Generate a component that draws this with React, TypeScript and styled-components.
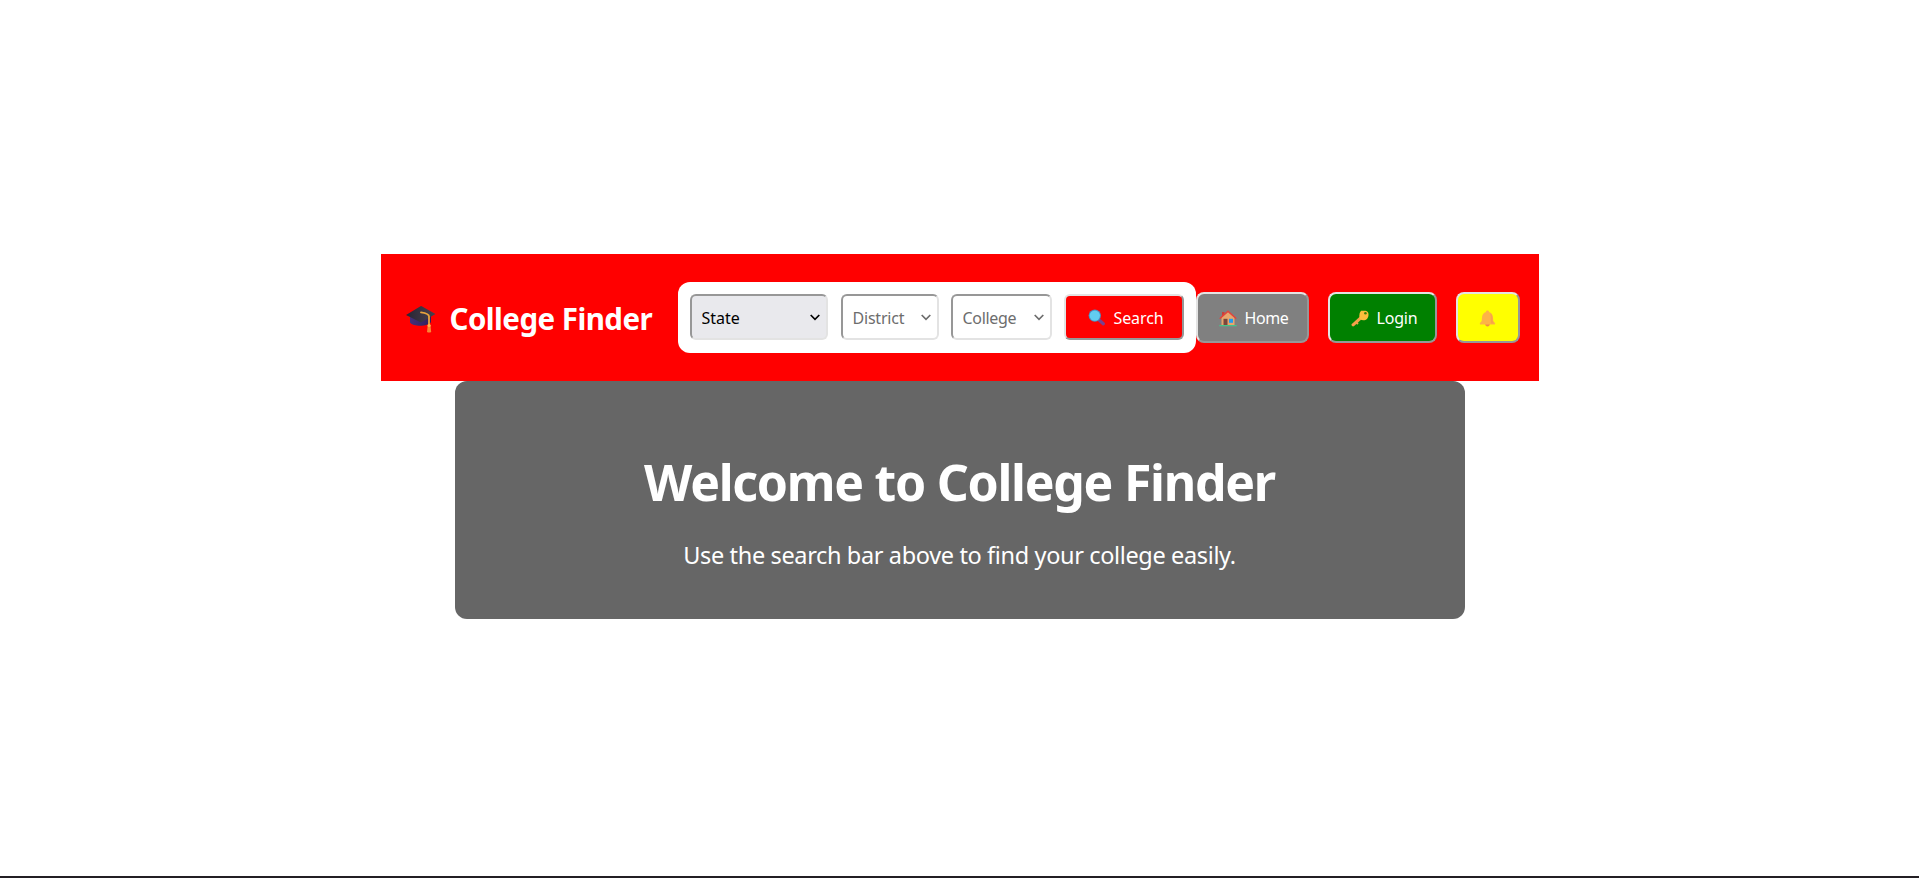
import React from "react";
import styled, { createGlobalStyle } from "styled-components";

const GlobalStyle = createGlobalStyle`
  *, *::before, *::after { box-sizing: border-box; }
  body {
    margin: 0;
    background: #fff;
    font-family: "Noto Sans", "Open Sans", sans-serif;
  }
`;

const Page = styled.div`
  display: flex;
  flex-direction: column;
  align-items: center;
  height: 878px;
  padding-top: 254px;
  border-bottom: 2px solid #231f24;
  overflow: hidden;
`;

const Header = styled.header`
  display: flex;
  align-items: center;
  width: 1158px;
  height: 127px;
  padding-left: 24px;
  background: #ff0000;
`;

const Brand = styled.div`
  display: flex;
  align-items: center;
  flex: none;
  gap: 13px;
  width: 273px;
  padding-top: 2px;
  color: #fff;
  font-size: 29.5px;
  font-weight: 700;
  letter-spacing: -0.53px;
  white-space: nowrap;
`;

const SearchBar = styled.div`
  display: flex;
  align-items: center;
  flex: none;
  width: 518px;
  height: 71px;
  padding: 0 0 1px 12px;
  background: #fff;
  border-radius: 12px;
`;

const SelectBox = styled.div<{ $width: number; $gap: number }>`
  position: relative;
  flex: none;
  width: ${(p) => p.$width}px;
  height: 46px;
  margin-right: ${(p) => p.$gap}px;
`;

const Select = styled.select<{ $tracking: number }>`
  appearance: none;
  display: block;
  width: 100%;
  height: 100%;
  padding: 2px 0 0 10px;
  border: 2px solid;
  border-color: #979797 #e3e3e3 #e3e3e3 #979797;
  border-radius: 6px;
  background: #e9e9ed;
  color: #000;
  font: 16px "Noto Sans", "Open Sans", sans-serif;
  letter-spacing: ${(p) => p.$tracking}px;
  opacity: 1;

  &:disabled {
    background: #fff;
    color: #6d6d6d;
    opacity: 1;
  }
`;

const Chevron = styled.svg<{ $muted?: boolean }>`
  position: absolute;
  top: 20px;
  right: 8px;
  width: 10px;
  height: 7px;
  fill: none;
  stroke: ${(p) => (p.$muted ? "#6d6d6d" : "#000")};
  stroke-width: 1.7;
  pointer-events: none;
`;

const Button = styled.button<{ $bg: string; $width: number; $short?: boolean }>`
  display: flex;
  align-items: center;
  flex: none;
  gap: ${(p) => (p.$short ? 9 : 8)}px;
  width: ${(p) => p.$width}px;
  height: ${(p) => (p.$short ? 46 : 51)}px;
  padding: 1px 0 0 ${(p) => (p.$short ? 22 : 21)}px;
  border: 2px solid;
  border-color: #e3e3e3 #979797 #979797 #e3e3e3;
  border-radius: ${(p) => (p.$short ? 6 : 8)}px;
  background: ${(p) => p.$bg};
  color: #fff;
  font: 16px "Noto Sans", "Open Sans", sans-serif;
  white-space: nowrap;

  svg {
    flex: none;
  }
`;

const Label = styled.span<{ $tracking: number }>`
  letter-spacing: ${(p) => p.$tracking}px;
`;

const Nav = styled.nav`
  display: flex;
  align-items: center;
  gap: 19px;
`;

const Hero = styled.section`
  width: 1010px;
  height: 238px;
  padding-top: 67px;
  border-radius: 12px;
  background: #666;
  color: #fff;
  text-align: center;
`;

const Title = styled.h1`
  margin: 0 0 23px;
  font-size: 50px;
  line-height: 68px;
  font-weight: 700;
  letter-spacing: -1.28px;
`;

const Subtitle = styled.p`
  margin: 0;
  font-size: 23.5px;
  line-height: 32px;
  letter-spacing: -0.36px;
`;

const CapIcon = () => (
  <svg width="32" height="28" viewBox="0 0 32 28">
    <defs>
      <linearGradient id="capBase" x1="0" x2="1">
        <stop offset="0" stopColor="#43307a" />
        <stop offset="1" stopColor="#30205b" />
      </linearGradient>
      <linearGradient id="capTop" x1="0" x2="1">
        <stop offset="0" stopColor="#282533" />
        <stop offset="1" stopColor="#49414f" />
      </linearGradient>
    </defs>
    <path d="M5 11v6.500C8 22 23 22 26 17v-6Z" fill="url(#capBase)" />
    <path d="M1 10 15.500 1.200q.6-.4 1.200 0L30.500 9 16 17.500Z" fill="url(#capTop)" />
    <path d="M16 7.300c4 .6 8 1.400 8 4v9.500" fill="none" stroke="#e8a33d" strokeWidth="1.8" strokeLinecap="round" />
    <path d="M22.800 20h2.600l.8 7q-2.100 1.100-4.200 0Z" fill="#f98635" />
    <circle cx="24.100" cy="20.500" r="1.600" fill="#ffb44b" />
  </svg>
);

const LensIcon = () => (
  <svg width="17" height="17" viewBox="0 0 17 17">
    <path d="m10.500 10.500 4.800 4.300" stroke="#78408f" strokeWidth="3.2" strokeLinecap="round" />
    <circle cx="6.800" cy="6.600" r="6.200" fill="#4c8fc0" />
    <circle cx="6.800" cy="6.600" r="5.200" fill="#62cdf0" />
  </svg>
);

const HouseIcon = () => (
  <svg width="18" height="17" viewBox="0 0 18 17">
    <path d="M3 2h2.500v5H3Z" fill="#c9403a" />
    <path d="M2.500 7.500 9 2l6.500 5.500v8h-13Z" fill="#e8a66d" />
    <path d="M1.200 8.300 9 1.300l7.800 7" fill="none" stroke="#e3433b" strokeWidth="1.500" strokeLinecap="round" />
    <path d="M4.500 8.800h4v6.700h-4Z" fill="#79473d" />
    <path d="M10 8.800h4v4h-4Z" fill="#239cf0" />
    <path d="M.8 15.700h16.400" stroke="#43c58a" strokeWidth="1.300" strokeLinecap="round" />
  </svg>
);

const KeyIcon = () => (
  <svg width="18" height="17" viewBox="0 0 18 17">
    <path d="m9.800 7.800-7.700 7" stroke="#f5a04b" strokeWidth="3.100" strokeLinecap="round" />
    <path d="m5.500 14 1.300-1.400" stroke="#f5a04b" strokeWidth="2.200" />
    <path d="M10 .8h4.500q3 .7 3 3.600c0 4-2.300 5.800-5 5.800-3 0-4.400-1.800-4.200-4.500Q8.400 2.600 10 .8Z" fill="#fbbd3d" />
    <circle cx="14.400" cy="3.300" r="1.300" fill="#3d8107" />
  </svg>
);

const BellIcon = () => (
  <svg width="17" height="17" viewBox="0 0 17 17">
    <circle cx="8.500" cy="14.300" r="2.200" fill="#f28b45" />
    <path d="M8.500.5c1 0 1.500.6 1.500 1.400 2.500.8 3.800 2.700 4 5.300l.3 3.800 1.700 2c.5.800.2 1.500-.8 1.500H1.800c-1 0-1.300-.7-.8-1.500l1.700-2L3 7.200c.2-2.600 1.500-4.500 4-5.300C7 1.100 7.500.5 8.500.5Z" fill="#fdb347" />
    <path d="M11.500 3c1.800 1.300 2 4.500 2.200 8l1.300 2.500h-3Z" fill="#f49a4c" opacity=".6" />
  </svg>
);

interface FieldProps {
  label: string;
  width: number;
  gap: number;
  tracking: number;
  disabled?: boolean;
}

const Field = ({ label, width, gap, tracking, disabled }: FieldProps) => (
  <SelectBox $width={width} $gap={gap}>
    <Select disabled={disabled} aria-label={label} $tracking={tracking}>
      <option>{label}</option>
    </Select>
    <Chevron viewBox="0 0 10 7" $muted={disabled}>
      <path d="m.7 1 4.300 4.300L9.300 1" />
    </Chevron>
  </SelectBox>
);

export default function App() {
  return (
    <>
      <GlobalStyle />
      <Page>
        <Header>
          <Brand>
            <CapIcon />
            <span>College Finder</span>
          </Brand>
          <SearchBar>
            <Field label="State" width={138} gap={13} tracking={0} />
            <Field label="District" width={98} gap={12} tracking={-0.2} disabled />
            <Field label="College" width={101} gap={12} tracking={-0.3} disabled />
            <Button $bg="#ff0000" $width={120} $short>
              <LensIcon />
              <Label $tracking={-0.1}>Search</Label>
            </Button>
          </SearchBar>
          <Nav>
            <Button $bg="#808080" $width={113}>
              <HouseIcon />
              <Label $tracking={-0.45}>Home</Label>
            </Button>
            <Button $bg="#008000" $width={109}>
              <KeyIcon />
              <Label $tracking={-0.2}>Login</Label>
            </Button>
            <Button $bg="#ffff00" $width={64} aria-label="Notifications">
              <BellIcon />
            </Button>
          </Nav>
        </Header>
        <Hero>
          <Title>Welcome to College Finder</Title>
          <Subtitle>Use the search bar above to find your college easily.</Subtitle>
        </Hero>
      </Page>
    </>
  );
}
